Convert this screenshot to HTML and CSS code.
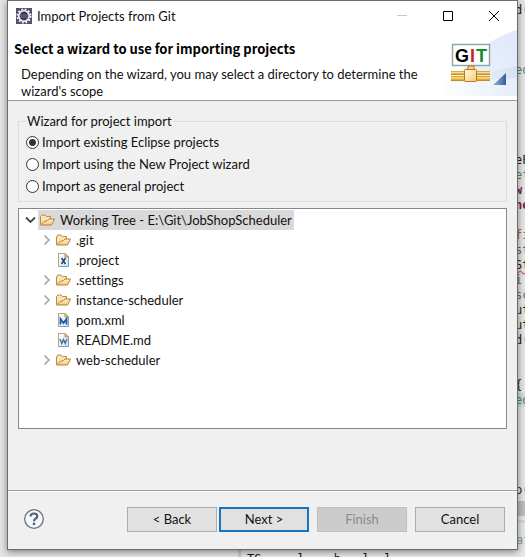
FILE: index.html
```html
<!DOCTYPE html>
<html lang="en">
<head>
<meta charset="utf-8">
<title>Import Projects from Git</title>
<link rel="stylesheet" href="styles.css">
</head>
<body>
<svg class="defs" aria-hidden="true">
  <defs>
    <linearGradient id="fold" x1="0" y1="0" x2="0" y2="1"><stop offset="0" stop-color="#fff3cf"/><stop offset="1" stop-color="#f3c878"/></linearGradient>
    <linearGradient id="paper" x1="0" y1="0" x2="1" y2="1"><stop offset="0" stop-color="#fff"/><stop offset="1" stop-color="#cfe2f5"/></linearGradient>
    <symbol id="folder" viewBox="0 0 16 16">
      <path d="M1.5 12.5V4.5L3 3H6L7.5 4.5H11.5V7" fill="#fbe3ae" stroke="#b98a45"/>
      <path d="M1.5 13L5 9.5L8.5 8.5L10 7H15.5L12.5 13Z" fill="url(#fold)" stroke="#b98032" stroke-linejoin="round"/>
    </symbol>
    <symbol id="page" viewBox="0 0 16 16">
      <path d="M3.5 1.5H10L13.5 5V14.5H3.5Z" fill="url(#paper)" stroke="#829dbb"/>
      <path d="M3.5 14.5V1.5H10" fill="none" stroke="#b7a875"/>
      <path d="M10 1.5V5H13.5Z" fill="#e8c983" stroke="#b69860"/>
    </symbol>
    <symbol id="shut" viewBox="0 0 16 16"><path d="M6.5 3.5L11 8L6.5 12.5" fill="none" stroke="#a6a6a6" stroke-width="1.7"/></symbol>
    <symbol id="open" viewBox="0 0 16 16"><path d="M4 5.5L8.5 10L13 5.5" fill="none" stroke="#444" stroke-width="1.8"/></symbol>
  </defs>
</svg>

<div class="desktop">
  <pre class="code">d(



<i class="g">ed</i>





eP
<i class="g">et</i>
<b>w</b>
<b>ne</b>

<i class="r">fi</i>
<i class="d">st</i>
<i class="err">St</i>
<i class="d">i</i>
<i class="d">sc</i>
ut
ut
d(


{
<i class="g hit">ed</i>





p(</pre>
  <div class="scroll"></div>
  <div class="tab">at</div>
  <div class="console">TS     l    b   l  l</div>
</div>

<main class="dialog">
  <header class="titlebar">
    <svg class="app" viewBox="0 0 16 16" aria-hidden="true">
      <rect width="16" height="16" fill="#55506f"/>
      <circle cx="8" cy="8" r="6.5" fill="none" stroke="#f5f5f8" stroke-width="2" stroke-dasharray="1.7 1.7"/>
      <circle cx="8" cy="8" r="5.2" fill="#3b3850" stroke="#f2f2f6" stroke-width="1.6"/>
      <path d="M4 7H12M4 9H12" stroke="#77738f"/>
    </svg>
    <span class="caption">Import Projects from Git</span>
    <button class="win" aria-label="Minimize" disabled><svg viewBox="0 0 12 12"><path d="M1 5.5H11" stroke="#c9c9c9"/></svg></button>
    <button class="win" aria-label="Maximize"><svg viewBox="0 0 12 12"><path d="M1.5 1.5H10.5V10.5H1.5Z" fill="none" stroke="#000"/></svg></button>
    <button class="win" aria-label="Close"><svg viewBox="0 0 12 12"><path d="M1 1L11 11M11 1L1 11" stroke="#000"/></svg></button>
  </header>

  <section class="banner">
    <div class="intro">
      <h1>Select a wizard to use for importing projects</h1>
      <p>Depending on the wizard, you may select a directory to determine the wizard's scope</p>
    </div>
    <svg class="art" viewBox="0 0 75 70" role="img" aria-label="Git">
      <defs>
        <linearGradient id="sky" x1="1" y1="0" x2="0" y2="1"><stop offset="0" stop-color="#dfe8fa"/><stop offset=".5" stop-color="#e8effc"/><stop offset="1" stop-color="#fff"/></linearGradient>
        <linearGradient id="sky2" x1="1" y1="0" x2="0" y2="0"><stop offset="0" stop-color="#d5def0"/><stop offset="1" stop-color="#fbfcff"/></linearGradient>
        <linearGradient id="low" x1="1" y1="0" x2="0" y2="0"><stop offset="0" stop-color="#e6eefb"/><stop offset="1" stop-color="#fcfdff"/></linearGradient>
        <linearGradient id="pipe" x1="0" y1="0" x2="0" y2="1"><stop offset="0" stop-color="#c88b13"/><stop offset=".35" stop-color="#ffdf80"/><stop offset="1" stop-color="#c07c08"/></linearGradient>
        <linearGradient id="hub" x1="0" y1="0" x2="1" y2="1"><stop offset="0" stop-color="#fffdf0"/><stop offset="1" stop-color="#f8c96a"/></linearGradient>
        <linearGradient id="wedge" x1="0" y1="0" x2="1" y2="0"><stop offset="0" stop-color="#9bb4d9"/><stop offset="1" stop-color="#385b98"/></linearGradient>
      </defs>
      <path d="M75 0Q30 12 4 66H75Z" fill="url(#sky)"/>
      <path d="M0 50Q40 42 75 36V48Q40 50 0 55Z" fill="url(#sky2)" opacity=".8"/>
      <path d="M2 54Q40 50 75 48V66H2Z" fill="url(#low)"/>
      <rect x="10.5" y="14.5" width="37" height="21" fill="#fff" stroke="#92a8a8" stroke-width="1.5"/>
      <text class="git" y="32"><tspan x="13">G</tspan><tspan x="28" fill="#cf2028">I</tspan><tspan x="34" fill="#178a2e">T</tspan></text>
      <rect x="9" y="41" width="39" height="4" fill="url(#pipe)"/><rect x="9" y="46" width="39" height="5" fill="url(#pipe)"/>
      <rect x="26" y="36" width="6" height="4" fill="#f7d78d" stroke="#b47911"/>
      <rect x="22.5" y="39.5" width="12" height="12" rx="1" fill="url(#hub)" stroke="#b47911"/>
      <path d="M51 55L64 43V55Z" fill="url(#wedge)"/>
    </svg>
  </section>

  <section class="content">
    <fieldset>
      <legend>Wizard for project import</legend>
      <label><input type="radio" name="mode" checked>Import existing Eclipse projects</label>
      <label><input type="radio" name="mode">Import using the New Project wizard</label>
      <label><input type="radio" name="mode">Import as general project</label>
    </fieldset>
    <ul class="tree" role="tree">
      <li class="root" role="treeitem" aria-expanded="true"><svg class="arrow"><use href="#open"/></svg><span class="picked"><svg class="icon"><use href="#folder"/></svg>Working Tree - E:\Git\JobShopScheduler</span></li>
      <li role="treeitem"><svg class="arrow"><use href="#shut"/></svg><svg class="icon"><use href="#folder"/></svg>.git</li>
      <li role="treeitem"><span class="arrow"></span><svg class="icon" viewBox="0 0 16 16"><use href="#page"/><path d="M6.5 6L10.5 12M10.5 6L6.5 12" stroke="#1d4775" stroke-width="1.5"/></svg>.project</li>
      <li role="treeitem"><svg class="arrow"><use href="#shut"/></svg><svg class="icon"><use href="#folder"/></svg>.settings</li>
      <li role="treeitem"><svg class="arrow"><use href="#shut"/></svg><svg class="icon"><use href="#folder"/></svg>instance-scheduler</li>
      <li role="treeitem"><span class="arrow"></span><svg class="icon" viewBox="0 0 16 16"><use href="#page"/><path d="M5.5 12.5V7L8.5 11L11.5 7V12.5" fill="none" stroke="#1f5ba5" stroke-width="1.8"/></svg>pom.xml</li>
      <li role="treeitem"><span class="arrow"></span><svg class="icon" viewBox="0 0 16 16"><use href="#page"/><path d="M5 7L6.8 11.5L8.5 7.5L10.2 11.5L12 7" fill="none" stroke="#3f6f9f" stroke-width="1.4"/></svg>README.md</li>
      <li role="treeitem"><svg class="arrow"><use href="#shut"/></svg><svg class="icon"><use href="#folder"/></svg>web-scheduler</li>
    </ul>
  </section>

  <footer class="actions">
    <button class="help" aria-label="Help"><svg viewBox="0 0 20 20"><circle cx="10" cy="10" r="9.3" fill="#f7f8fb" stroke="#66718a" stroke-width="1.3"/><path d="M6.5 7.5Q6.7 4.5 10 4.5Q13.3 4.5 13.3 7.2Q13.3 8.7 11.5 9.7Q10 10.5 10 12.2" fill="none" stroke="#55617f" stroke-width="2.2"/><rect x="8.8" y="13.6" width="2.4" height="2.4" fill="#55617f"/></svg></button>
    <div class="pair"><button class="btn">&lt; Back</button><button class="btn primary">Next &gt;</button></div>
    <button class="btn" disabled>Finish</button>
    <button class="btn">Cancel</button>
  </footer>
</main>
</body>
</html>
```
FILE: styles.css
```css
* { box-sizing: border-box; }
body {
  margin: 0;
  height: 100vh;
  overflow: hidden;
  display: flex;
  background: #e6e6e6;
  color: #111;
  font: 13px/18px Lato, "Noto Sans", sans-serif;
  font-variant-ligatures: none;
}
button { font: inherit; color: inherit; padding: 0; border: 0; background: none; }
svg { display: block; flex: none; }
.defs { position: absolute; width: 0; height: 0; }

.desktop { position: absolute; inset: 0; overflow: hidden; font: 12px/15px "DejaVu Sans Mono", monospace; }
.code { position: absolute; top: 3px; right: 0; width: 10px; margin: 0; font: inherit; color: #222; }
.code i { font-style: normal; }
.code b { color: #7f1650; }
.code .g { color: #4f8570; }
.code .r { color: #a85c3c; }
.code .d { color: #666; }
.code .err { text-decoration: underline wavy #d55; }
.code .hit { background: #cfdcdc; }
.scroll { position: absolute; right: 0; bottom: 41px; width: 8px; height: 15px; background: #bdbdbd; }
.tab { position: absolute; right: 0; bottom: 0; width: 9px; height: 37px; padding-top: 10px; border-top: 3px solid #d2d2e0; color: #8aa0a0; }
.console { position: absolute; left: 238px; right: 0; bottom: 0; height: 7px; padding: 3px 0 0 6px; white-space: pre; line-height: 12px; border-left: 3px solid #c8c8d8; background: #e9e9ed; }

.dialog {
  position: relative;
  flex: 1;
  display: flex;
  flex-direction: column;
  margin: 0 7px 7px;
  border: 1px solid #6c6c6c;
  background: #f0f0f0;
  box-shadow: 0 2px 7px rgba(0, 0, 0, .45);
}
.titlebar { display: flex; align-items: center; height: 29px; padding-left: 8px; background: #fff; }
.app { width: 16px; height: 16px; margin-right: 5px; }
.caption { flex: 1; }
.win { display: grid; place-items: center; width: 46px; height: 28px; }
.win svg { width: 12px; height: 12px; }

.banner { display: flex; align-items: flex-end; height: 71px; background: #fff; border-bottom: 1px solid #999; }
.intro { flex: 1; align-self: stretch; padding: 10px 0 0 6px; }
h1 { margin: 0 0 8px; font: bold 13px/18px "Noto Sans CJK SC", "Noto Sans", sans-serif; color: #000; }
p { margin: 0 0 0 7px; line-height: 17px; }
.art { width: 75px; height: 70px; }
.git { font: bold 18px "Liberation Sans", sans-serif; }

.content { flex: 1; display: flex; flex-direction: column; gap: 6px; padding: 11px 10px 61px; }
fieldset { margin: 0; padding: 1px 7px 4px; border: 1px solid #dcdcdc; min-width: 0; }
legend { padding: 0 1px; line-height: 18px; }
label { display: flex; align-items: center; gap: 3px; height: 22px; }
input {
  appearance: none;
  width: 13px;
  height: 13px;
  margin: 0;
  border: 1px solid #333;
  border-radius: 50%;
  background: #fff;
}
input:checked { background: radial-gradient(circle, #333 3px, #fff 4px); }

.tree { flex: 1; margin: 0; padding: 1px 3px; list-style: none; border: 1px solid #828790; background: #fff; }
.tree li { display: flex; align-items: center; height: 20px; padding-left: 16px; }
.tree .root { padding-left: 0; }
.arrow { width: 16px; height: 16px; }
.icon { width: 16px; height: 16px; margin: 0 5px 0 1px; }
.picked { display: flex; align-items: center; height: 20px; padding-right: 2px; background: #d9d9d9; }

.actions { display: flex; align-items: center; gap: 8px; height: 59px; padding: 0 12px 2px 16px; border-top: 1px solid #a0a0a0; box-shadow: inset 0 1px #fff; }
.help { width: 20px; height: 20px; margin-right: auto; }
.help svg { width: 20px; height: 20px; }
.pair { display: flex; gap: 2px; }
.btn { width: 90px; height: 25px; border: 1px solid #adadad; background: #e1e1e1; }
.primary { border: 2px solid #1874bc; }
.btn:disabled { border-color: #bfbfbf; background: #ccc; color: #8b8b8b; }
```
